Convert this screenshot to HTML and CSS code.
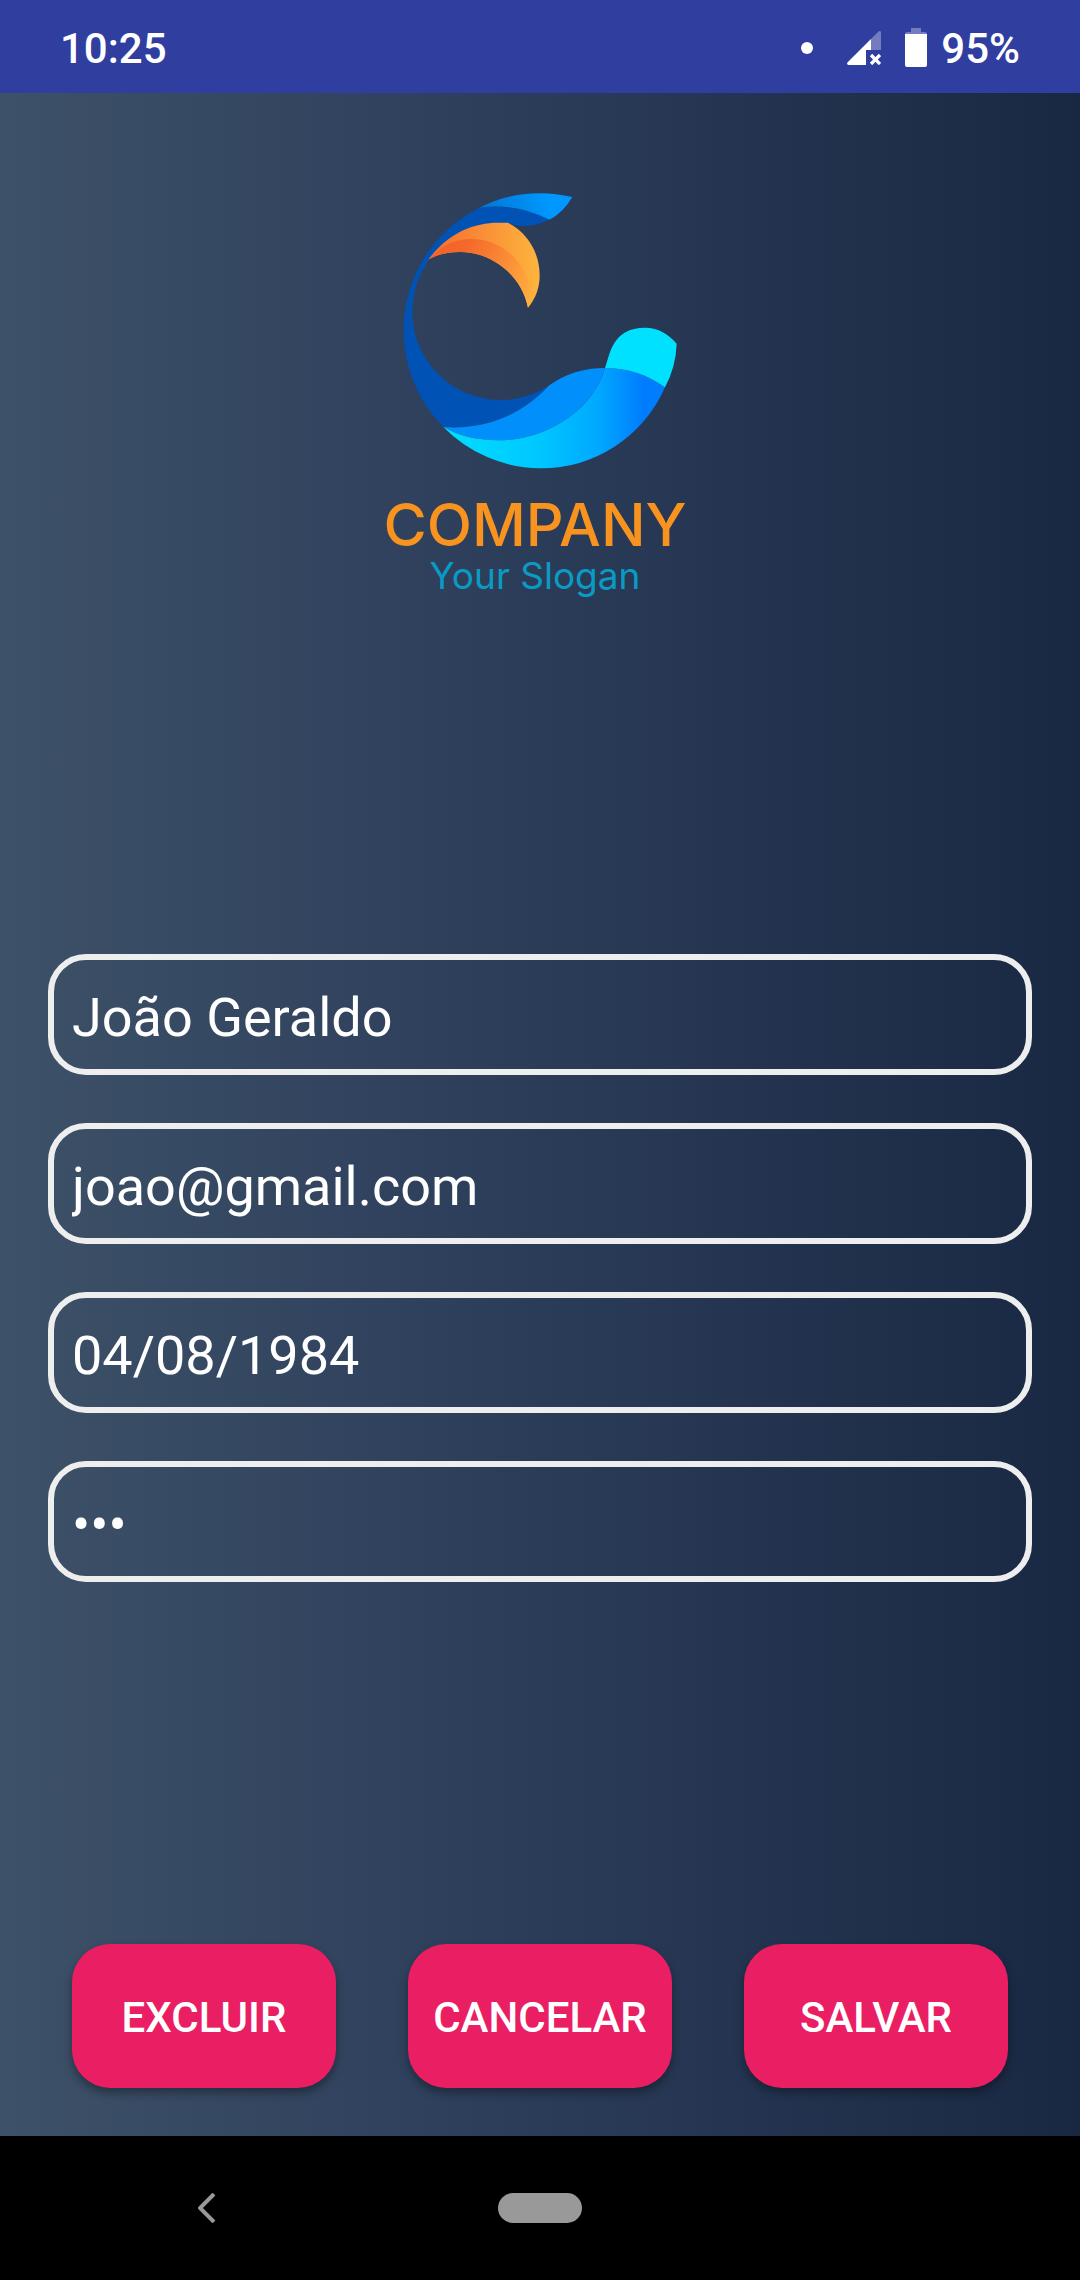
FILE: index.html
```html
<!DOCTYPE html>
<html lang="pt-BR">
<head>
<meta charset="utf-8">
<meta name="viewport" content="width=device-width, initial-scale=1">
<title>Cadastro</title>
<link rel="stylesheet" href="styles.css">
</head>
<body>
<header class="status-bar">
  <span>10:25</span>
  <div class="status-icons">
    <svg class="notification" width="12" height="12" viewBox="0 0 12 12" aria-hidden="true"><circle cx="6" cy="6" r="6" fill="#fff"/></svg>
    <svg class="signal" width="34" height="34" viewBox="0 0 102 102" aria-hidden="true">
      <path d="M72 24L94 2Q102-3 102 6V57H72Z" fill="#fff" opacity=".32"/>
      <path d="M72 24V57H57V102H5Q-3 100 2 94Z" fill="#fff"/>
      <path d="M72 72L99 99M99 72L72 99" stroke="#fff" stroke-width="10"/>
    </svg>
    <svg class="battery" width="22" height="39" viewBox="0 0 66 117" aria-hidden="true">
      <path d="M18 0H48V12H60Q66 12 66 18H0Q0 12 6 12H18Z" fill="#fff" opacity=".32"/>
      <path d="M0 18H66V111Q66 117 60 117H6Q0 117 0 111Z" fill="#fff"/>
    </svg>
    <span>95%</span>
  </div>
</header>

<main class="screen">
  <div class="logo">
    <svg class="logo-mark" width="290" height="280" viewBox="90 60 870 840" aria-hidden="true">
      <defs>
        <linearGradient id="wave" gradientUnits="userSpaceOnUse" x1="250" y1="0" x2="915" y2="0">
          <stop offset="0" stop-color="#00deff"/><stop offset=".42" stop-color="#00c8ff"/>
          <stop offset=".7" stop-color="#00a8ff"/><stop offset=".9" stop-color="#007dff"/>
        </linearGradient>
        <linearGradient id="tip" gradientUnits="userSpaceOnUse" x1="370" y1="130" x2="560" y2="70">
          <stop offset="0" stop-color="#0077d4"/><stop offset="1" stop-color="#0098ff"/>
        </linearGradient>
        <linearGradient id="leaf" gradientUnits="userSpaceOnUse" x1="206" y1="0" x2="539" y2="0">
          <stop offset="0" stop-color="#f66c2b"/><stop offset=".4" stop-color="#f98835"/><stop offset="1" stop-color="#fdb53d"/>
        </linearGradient>
        <linearGradient id="fold" gradientUnits="userSpaceOnUse" x1="206" y1="240" x2="510" y2="380">
          <stop offset="0" stop-color="#f2602a"/><stop offset=".3" stop-color="#f4692b"/><stop offset="1" stop-color="#ffad3f"/>
        </linearGradient>
      </defs>
      <path fill="#0052b4" d="M250 771A412 412 0 0 1 358 113Q470 98 568 149Q505 179 445 161A265 265 0 1 0 568 646C480 740 370 780 250 771Z"/>
      <path fill="url(#tip)" d="M358 113C440 70 540 58 637 81Q610 128 568 149Q470 98 358 113Z"/>
      <path fill="url(#leaf)" d="M206 268C262 190 340 158 415 158L443 158C505 190 539 250 539 317C539 350 528 385 504 413C485 315 395 246 300 246C265 246 235 252 206 268Z"/>
      <path fill="url(#fold)" d="M206 268C250 220 290 207 335 207C440 207 518 300 509 385L504 413C485 315 395 246 300 246C265 246 235 252 206 268Z"/>
      <path fill="#008ffb" d="M250 771C370 780 480 740 568 646Q640 594 735 594C700 720 560 811 415 811C350 811 290 795 250 771Z"/>
      <path fill="url(#wave)" d="M250 771C290 795 350 811 415 811C560 811 700 720 735 594C800 594 860 612 915 652A405 405 0 0 1 541 895A412 412 0 0 1 250 771Z"/>
      <path fill="#00e1ff" d="M735 594C750 555 755 473 856 473C895 473 925 492 950 521Q948 590 915 652C860 612 800 594 735 594Z"/>
    </svg>
    <span class="logo-name">COMPANY</span>
    <span class="logo-slogan">Your Slogan</span>
  </div>

  <form class="fields" id="profile">
    <input type="text" aria-label="Nome" value="João Geraldo">
    <input type="email" aria-label="E-mail" value="joao@gmail.com">
    <input type="text" inputmode="numeric" aria-label="Data de nascimento" value="04/08/1984">
    <input type="password" aria-label="Senha" value="123">
  </form>

  <div class="actions">
    <button type="button">EXCLUIR</button>
    <button type="button">CANCELAR</button>
    <button type="submit" form="profile">SALVAR</button>
  </div>
</main>

<nav class="nav-bar">
  <button class="nav-back" type="button" aria-label="Voltar">
    <svg width="18" height="30" viewBox="0 0 18 30" aria-hidden="true"><path d="M16 1L2 15L16 29" fill="none" stroke="#999" stroke-width="4"/></svg>
  </button>
  <button class="nav-home" type="button" aria-label="Início"></button>
</nav>
</body>
</html>
```
FILE: styles.css
```css
* {
  box-sizing: border-box;
}

body {
  margin: 0;
  min-height: 100vh;
  display: flex;
  flex-direction: column;
  font-family: Roboto, "Noto Sans", sans-serif;
  color: #fff;
}

button,
input {
  font: inherit;
  color: inherit;
}

.status-bar {
  display: flex;
  align-items: center;
  justify-content: space-between;
  height: 93px;
  padding: 3px 60px 0;
  background: #303f9f;
  font-size: 42px;
  font-weight: 500;
}

.status-icons {
  display: flex;
  align-items: center;
}

.signal {
  margin: 0 24px 0 34px;
}

.battery {
  margin: 0 14px 2px 0;
}

.screen {
  flex: 1;
  display: flex;
  flex-direction: column;
  justify-content: space-between;
  padding: 97px 48px 48px;
  background: linear-gradient(90deg, #3d5168, #2b3c59 50%, #192842);
}

.logo {
  display: flex;
  flex-direction: column;
  align-items: center;
  padding-right: 10px;
  font-family: Inter, sans-serif;
}

.logo-name {
  margin-top: 20px;
  font-size: 59px;
  font-weight: 500;
  line-height: 70px;
  color: #f7931e;
}

.logo-slogan {
  font-size: 37px;
  line-height: 32px;
  color: #0a9bc4;
}

.fields {
  display: flex;
  flex-direction: column;
  gap: 48px;
}

.fields input {
  width: 100%;
  height: 121px;
  padding: 6px 18px 0;
  border: 6px solid #eee;
  border-radius: 38px;
  outline: none;
  background: none;
  font-size: 54px;
}

.actions {
  display: grid;
  grid-template-columns: repeat(3, 1fr);
  gap: 72px;
  padding: 0 24px;
}

.actions button {
  height: 144px;
  padding: 2px 0 0;
  border: 0;
  border-radius: 38px;
  background: #e91e63;
  box-shadow: 0 5px 10px rgba(0, 0, 0, 0.35);
  font-size: 42px;
  font-weight: 500;
}

.nav-bar {
  display: grid;
  grid-template-columns: 1fr 84px 1fr;
  align-items: center;
  height: 144px;
  background: #000;
}

.nav-bar button {
  padding: 0;
  border: 0;
  background: none;
}

.nav-back {
  display: flex;
  justify-self: center;
  margin-right: 84px;
}

.nav-bar .nav-home {
  height: 30px;
  border-radius: 15px;
  background: #999;
}
```
